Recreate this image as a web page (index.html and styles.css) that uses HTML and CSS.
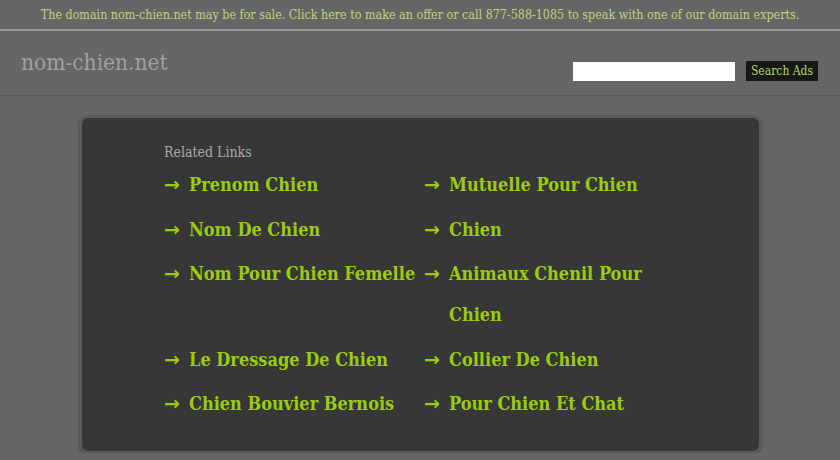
FILE: index.html
```html
<!DOCTYPE html>
<html>
<head>
<meta charset="utf-8">
<link rel="stylesheet" href="styles.css">
</head>
<body>
<div class="topbar">The domain nom-chien.net may be for sale. Click here to make an offer or call 877-588-1085 to speak with one of our domain experts.</div>
<div class="header">
  <div class="title">nom-chien.net</div>
  <form class="search">
    <input class="search-input" type="text">
    <button class="search-btn" type="button">Search Ads</button>
  </form>
</div>
<div class="main">
  <div class="box">
    <div class="related">Related Links</div>
    <div class="links">
      <div class="link"><span class="arrow">→</span><span class="txt">Prenom Chien</span></div>
      <div class="link"><span class="arrow">→</span><span class="txt">Mutuelle Pour Chien</span></div>
      <div class="link"><span class="arrow">→</span><span class="txt">Nom De Chien</span></div>
      <div class="link"><span class="arrow">→</span><span class="txt">Chien</span></div>
      <div class="link"><span class="arrow">→</span><span class="txt">Nom Pour Chien Femelle</span></div>
      <div class="link"><span class="arrow">→</span><span class="txt">Animaux Chenil Pour Chien</span></div>
      <div class="link"><span class="arrow">→</span><span class="txt">Le Dressage De Chien</span></div>
      <div class="link"><span class="arrow">→</span><span class="txt">Collier De Chien</span></div>
      <div class="link"><span class="arrow">→</span><span class="txt">Chien Bouvier Bernois</span></div>
      <div class="link"><span class="arrow">→</span><span class="txt">Pour Chien Et Chat</span></div>
    </div>
  </div>
</div>
</body>
</html>
```
FILE: styles.css
```css
html, body {
  margin: 0;
  padding: 0;
  background: #666666;
  font-family: "DejaVu Serif Condensed", "DejaVu Serif", serif;
}
.topbar {
  height: 29px;
  line-height: 30px;
  text-align: center;
  font-size: 12.4px;
  color: #bcd67c;
  border-bottom: 2px solid #959595;
  white-space: nowrap;
  overflow: hidden;
}
.header {
  height: 64px;
  border-bottom: 1px solid #575757;
  display: flex;
  align-items: flex-start;
  justify-content: space-between;
  padding: 0 22px 0 21px;
}
.title {
  margin-top: 18px;
  font-size: 22.5px;
  color: #a0a0a0;
}
.search {
  display: flex;
  align-items: center;
  margin: 30px 0 0 0;
}
.search-input {
  width: 162px;
  height: 19px;
  border: none;
  padding: 0;
  margin: 0 11px 0 0;
  background: #ffffff;
}
.search-btn {
  height: 20px;
  width: 72px;
  padding: 0;
  border: none;
  background: #161816;
  color: #b4d66e;
  font-family: "DejaVu Serif Condensed", "DejaVu Serif", serif;
  font-size: 12px;
}
.main {
  padding: 20px 79px 0 80px;
}
.box {
  height: 337px;
  background: #373737;
  border: 2px solid #5c5c5c;
  border-radius: 8px;
  box-shadow: 0 1px 3px 1px #4e4e4e;
  padding: 26px 0 0 82px;
  box-sizing: border-box;
}
.related {
  font-size: 14px;
  color: #a8a8a8;
  line-height: 16px;
  margin-bottom: 4px;
}
.links {
  display: grid;
  grid-template-columns: 260px 260px;
  row-gap: 3.5px;
}
.link {
  display: flex;
  align-items: flex-start;
  font-size: 18px;
  font-weight: bold;
  color: #9acb0e;
  line-height: 41px;
}
.arrow {
  width: 25px;
  flex: none;
  font-family: "DejaVu Sans", sans-serif;
  font-size: 19px;
}
.txt {
  flex: 1;
}
```
